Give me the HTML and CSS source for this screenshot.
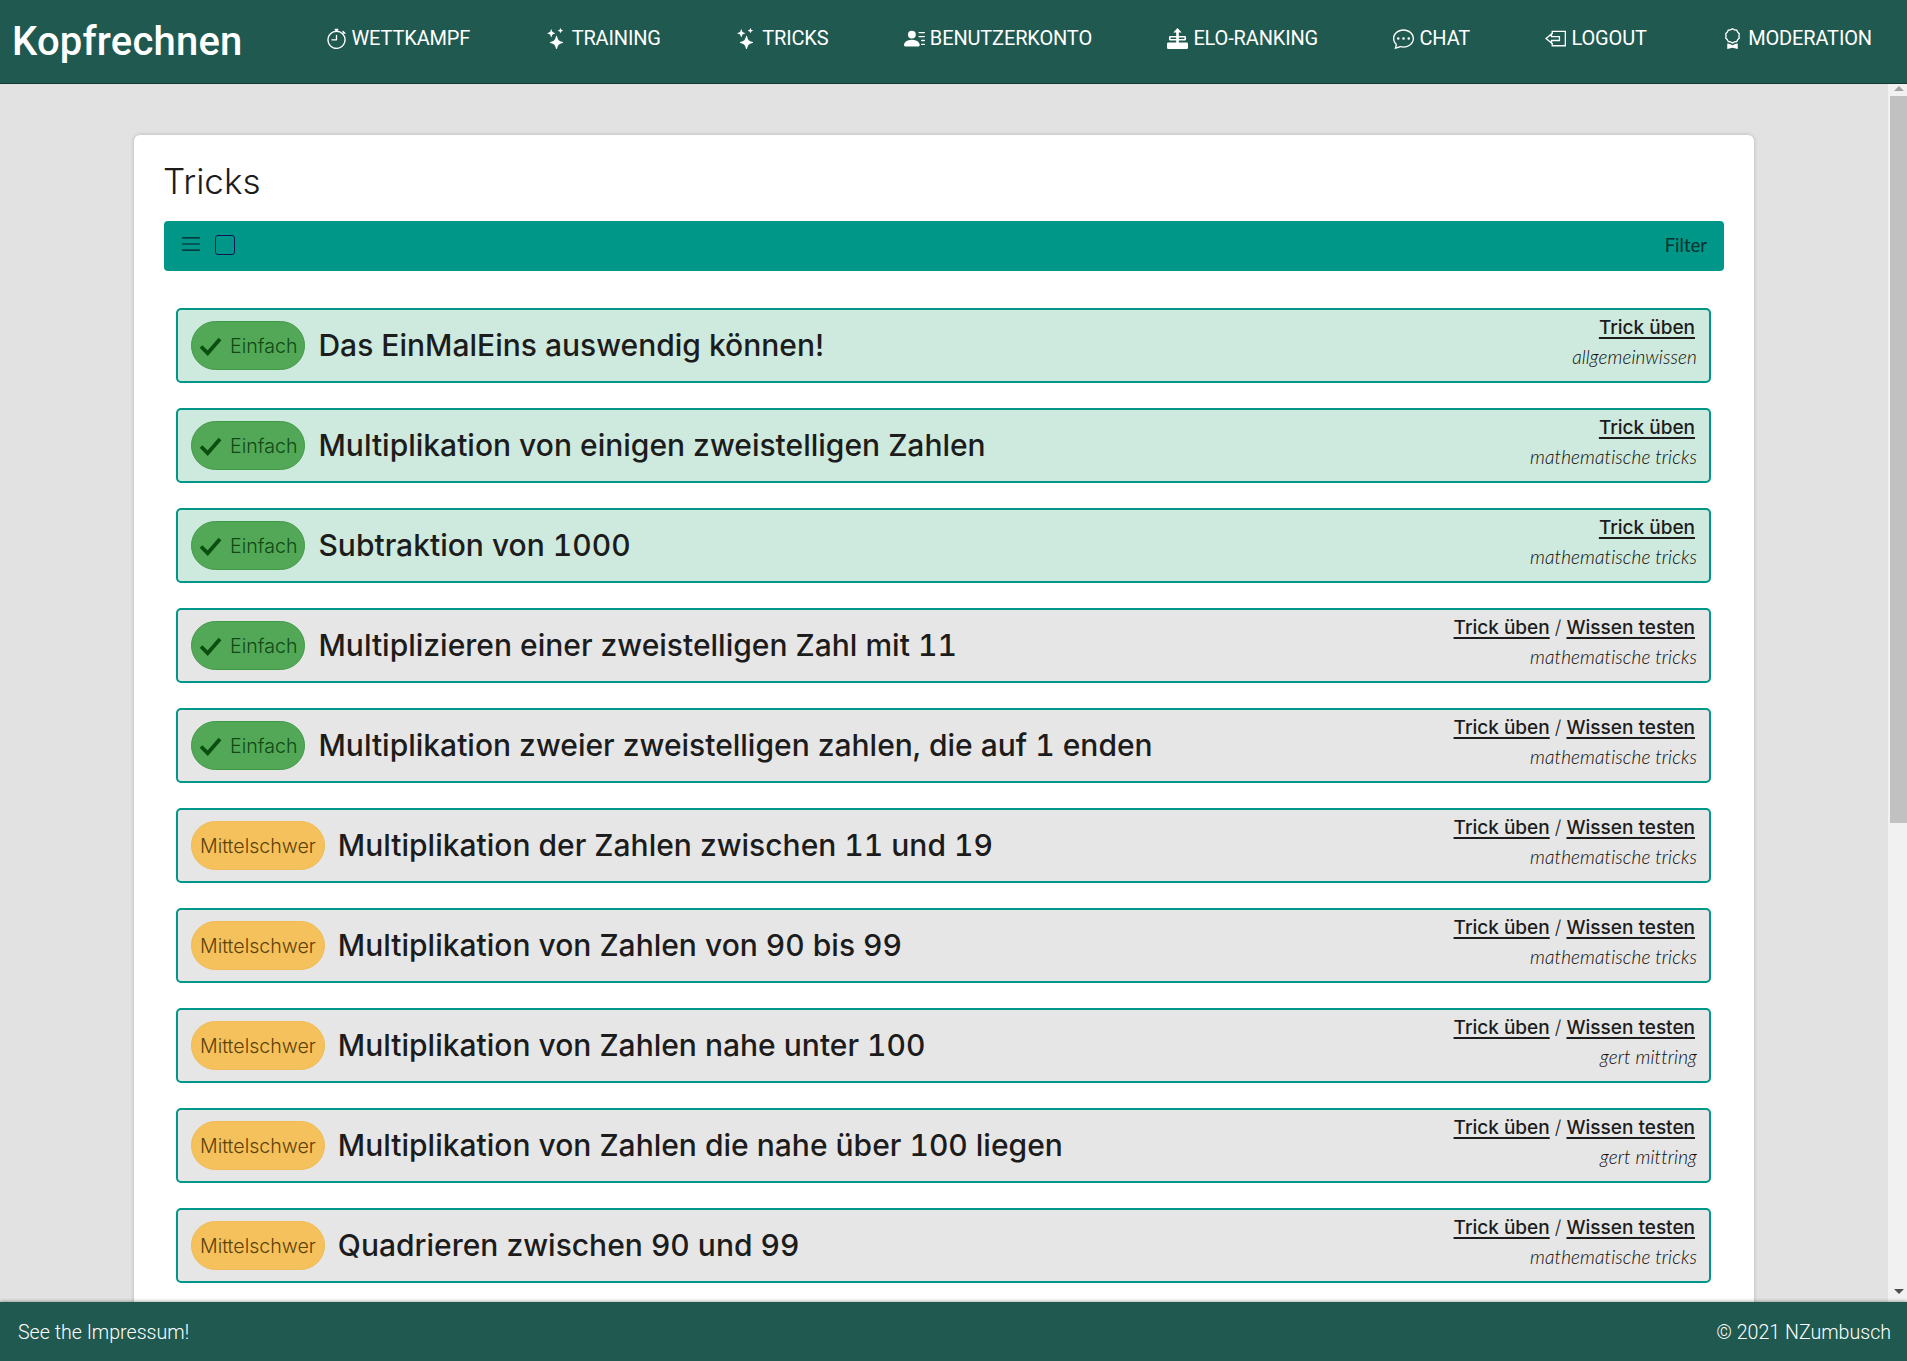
FILE: index.html
```html
<!DOCTYPE html>
<html lang="de">
<head>
    <meta charset="UTF-8">
    <meta name="viewport" content="width=device-width, initial-scale=1.0">
    <title>Kopfrechnen</title>
    <link rel="stylesheet" href="styles.css">
</head>
<body>
    <nav class="navbar">
        <a class="brand" href="#">Kopfrechnen</a>
        <ul class="nav-list">
            <li><a href="#"><svg class="nav-icon" viewBox="0 0 16 16"><path d="M8.5 5.6a.5.5 0 1 0-1 0v2.9h-3a.5.5 0 0 0 0 1H8a.5.5 0 0 0 .5-.5V5.6z"/><path d="M6.5 1A.5.5 0 0 1 7 .5h2a.5.5 0 0 1 0 1v.57c1.36.196 2.594.78 3.584 1.64a.715.715 0 0 1 .012-.013l.354-.354-.354-.353a.5.5 0 0 1 .707-.708l1.414 1.415a.5.5 0 1 1-.707.707l-.353-.354-.354.354a.512.512 0 0 1-.013.012A7 7 0 1 1 7 2.071V1.5a.5.5 0 0 1-.5-.5zM8 3a6 6 0 1 0 .001 12A6 6 0 0 0 8 3z"/></svg>WETTKAMPF</a></li>
            <li><a href="#"><svg class="nav-icon" viewBox="0 0 16 16"><path d="M7.657 6.247c.11-.33.576-.33.686 0l.645 1.937a2.89 2.89 0 0 0 1.829 1.828l1.936.645c.33.11.33.576 0 .686l-1.937.645a2.89 2.89 0 0 0-1.828 1.829l-.645 1.936a.361.361 0 0 1-.686 0l-.645-1.937a2.89 2.89 0 0 0-1.828-1.828l-1.937-.645a.361.361 0 0 1 0-.686l1.937-.645a2.89 2.89 0 0 0 1.828-1.828l.645-1.937zM3.794 1.148a.217.217 0 0 1 .412 0l.387 1.162c.173.518.579.924 1.097 1.097l1.162.387a.217.217 0 0 1 0 .412l-1.162.387A1.734 1.734 0 0 0 4.593 5.69l-.387 1.162a.217.217 0 0 1-.412 0L3.407 5.69A1.734 1.734 0 0 0 2.31 4.593l-1.162-.387a.217.217 0 0 1 0-.412l1.162-.387A1.734 1.734 0 0 0 3.407 2.31l.387-1.162zM10.863.099a.145.145 0 0 1 .274 0l.258.774c.115.346.386.617.732.732l.774.258a.145.145 0 0 1 0 .274l-.774.258a1.156 1.156 0 0 0-.732.732l-.258.774a.145.145 0 0 1-.274 0l-.258-.774a1.156 1.156 0 0 0-.732-.732L9.1 2.137a.145.145 0 0 1 0-.274l.774-.258c.346-.115.617-.386.732-.732L10.863.1z"/></svg>TRAINING</a></li>
            <li><a href="#"><svg class="nav-icon" viewBox="0 0 16 16"><path d="M7.657 6.247c.11-.33.576-.33.686 0l.645 1.937a2.89 2.89 0 0 0 1.829 1.828l1.936.645c.33.11.33.576 0 .686l-1.937.645a2.89 2.89 0 0 0-1.828 1.829l-.645 1.936a.361.361 0 0 1-.686 0l-.645-1.937a2.89 2.89 0 0 0-1.828-1.828l-1.937-.645a.361.361 0 0 1 0-.686l1.937-.645a2.89 2.89 0 0 0 1.828-1.828l.645-1.937zM3.794 1.148a.217.217 0 0 1 .412 0l.387 1.162c.173.518.579.924 1.097 1.097l1.162.387a.217.217 0 0 1 0 .412l-1.162.387A1.734 1.734 0 0 0 4.593 5.69l-.387 1.162a.217.217 0 0 1-.412 0L3.407 5.69A1.734 1.734 0 0 0 2.31 4.593l-1.162-.387a.217.217 0 0 1 0-.412l1.162-.387A1.734 1.734 0 0 0 3.407 2.31l.387-1.162zM10.863.099a.145.145 0 0 1 .274 0l.258.774c.115.346.386.617.732.732l.774.258a.145.145 0 0 1 0 .274l-.774.258a1.156 1.156 0 0 0-.732.732l-.258.774a.145.145 0 0 1-.274 0l-.258-.774a1.156 1.156 0 0 0-.732-.732L9.1 2.137a.145.145 0 0 1 0-.274l.774-.258c.346-.115.617-.386.732-.732L10.863.1z"/></svg>TRICKS</a></li>
            <li><a href="#"><svg class="nav-icon" viewBox="0 0 16 16"><path d="M6 8a3 3 0 1 0 0-6 3 3 0 0 0 0 6zm-5 6s-1 0-1-1 1-4 6-4 6 3 6 4-1 1-1 1H1zM11 3.5a.5.5 0 0 1 .5-.5h4a.5.5 0 0 1 0 1h-4a.5.5 0 0 1-.5-.5zm.5 2.5a.5.5 0 0 0 0 1h4a.5.5 0 0 0 0-1h-4zm2 3a.5.5 0 0 0 0 1h2a.5.5 0 0 0 0-1h-2zm0 3a.5.5 0 0 0 0 1h2a.5.5 0 0 0 0-1h-2z"/></svg>BENUTZERKONTO</a></li>
            <li><a href="#"><svg class="nav-icon" viewBox="0 0 16 16"><path fill-rule="evenodd" d="M8 0 4.800 3.500H7V6H2.500a1 1 0 0 0-1 1v1.500a1 1 0 0 0 1 1H7V11H1a1 1 0 0 0-1 1v3a1 1 0 0 0 1 1h14a1 1 0 0 0 1-1v-3a1 1 0 0 0-1-1H9V9.500h4.500a1 1 0 0 0 1-1V7a1 1 0 0 0-1-1H9V3.500h2.200L8 0zM2.700 7.200H7v1.100H2.700V7.200zm6.300 0h4.300v1.100H9V7.200z"/></svg>ELO-RANKING</a></li>
            <li><a href="#"><svg class="nav-icon" viewBox="0 0 16 16"><path d="M5 8a1 1 0 1 1-2 0 1 1 0 0 1 2 0zm4 0a1 1 0 1 1-2 0 1 1 0 0 1 2 0zm3 1a1 1 0 1 0 0-2 1 1 0 0 0 0 2z"/><path d="M2.165 15.803l.02-.004c1.83-.363 2.948-.842 3.468-1.105A9.06 9.06 0 0 0 8 15c4.418 0 8-3.134 8-7s-3.582-7-8-7-8 3.134-8 7c0 1.760.743 3.370 1.970 4.600a10.437 10.437 0 0 1-.524 2.318l-.003.011a10.722 10.722 0 0 1-.244.637c-.079.186.074.394.273.362a21.673 21.673 0 0 0 .693-.125zm.8-3.108a1 1 0 0 0-.287-.801C1.618 10.830 1 9.468 1 8c0-3.192 3.004-6 7-6s7 2.808 7 6c0 3.193-3.004 6-7 6a8.060 8.060 0 0 1-2.088-.272 1 1 0 0 0-.711.074c-.387.196-1.240.570-2.634.893a10.970 10.970 0 0 0 .398-2z"/></svg>CHAT</a></li>
            <li><a href="#"><svg class="nav-icon outline" viewBox="0 0 16 16"><path d="M5.500 4.500V2.500H15.500V13.500H5.500V11.500"/><path d="M.8 8 5 4.500V6.500H11V9.500H5V11.500z"/></svg>LOGOUT</a></li>
            <li><a href="#"><svg class="nav-icon" viewBox="0 0 16 16"><path d="M9.669.864 8 0 6.331.864l-1.858.282-.842 1.680-1.337 1.320L2.600 6l-.306 1.854 1.337 1.320.842 1.680 1.858.282L8 12l1.669-.864 1.858-.282.842-1.680 1.337-1.320L13.400 6l.306-1.854-1.337-1.320-.842-1.680L9.669.864zm1.196 1.193.684 1.365 1.086 1.072L12.387 6l.248 1.506-1.086 1.072-.684 1.365-1.510.229L8 10.874l-1.355-.702-1.510-.229-.684-1.365-1.086-1.072L3.614 6l-.250-1.506 1.087-1.072.684-1.365 1.510-.229L8 1.126l1.356.702 1.509.229z"/><path d="M4 11.794V16l4-1 4 1v-4.206l-2.018.306L8 13.126 6.018 12.100 4 11.794z"/></svg>MODERATION</a></li>
        </ul>
    </nav>

    <div class="viewport">
        <main class="content">
            <section class="card">
                <h1 class="card-title">Tricks</h1>
                <div class="toolbar">
                    <svg class="burger" viewBox="0 0 18 14"><path d="M0 .8h18M0 7h18M0 13.200h18"/></svg>
                    <span class="checkbox"></span>
                    <span class="filter">Filter</span>
                </div>

                <div class="trick done">
                    <span class="badge easy"><svg class="check" viewBox="0 0 24 20"><path d="M2 10l7 7L22 2"/></svg>Einfach</span>
                    <span class="trick-name">Das EinMalEins auswendig können!</span>
                    <div class="trick-side">
                        <div class="trick-links"><a href="#">Trick üben</a></div>
                        <div class="trick-tag">allgemeinwissen</div>
                    </div>
                </div>
                <div class="trick done">
                    <span class="badge easy"><svg class="check" viewBox="0 0 24 20"><path d="M2 10l7 7L22 2"/></svg>Einfach</span>
                    <span class="trick-name">Multiplikation von einigen zweistelligen Zahlen</span>
                    <div class="trick-side">
                        <div class="trick-links"><a href="#">Trick üben</a></div>
                        <div class="trick-tag">mathematische tricks</div>
                    </div>
                </div>
                <div class="trick done">
                    <span class="badge easy"><svg class="check" viewBox="0 0 24 20"><path d="M2 10l7 7L22 2"/></svg>Einfach</span>
                    <span class="trick-name">Subtraktion von 1000</span>
                    <div class="trick-side">
                        <div class="trick-links"><a href="#">Trick üben</a></div>
                        <div class="trick-tag">mathematische tricks</div>
                    </div>
                </div>
                <div class="trick">
                    <span class="badge easy"><svg class="check" viewBox="0 0 24 20"><path d="M2 10l7 7L22 2"/></svg>Einfach</span>
                    <span class="trick-name">Multiplizieren einer zweistelligen Zahl mit 11</span>
                    <div class="trick-side">
                        <div class="trick-links"><a href="#">Trick üben</a> <span class="sep">/</span> <a href="#">Wissen testen</a></div>
                        <div class="trick-tag">mathematische tricks</div>
                    </div>
                </div>
                <div class="trick">
                    <span class="badge easy"><svg class="check" viewBox="0 0 24 20"><path d="M2 10l7 7L22 2"/></svg>Einfach</span>
                    <span class="trick-name">Multiplikation zweier zweistelligen zahlen, die auf 1 enden</span>
                    <div class="trick-side">
                        <div class="trick-links"><a href="#">Trick üben</a> <span class="sep">/</span> <a href="#">Wissen testen</a></div>
                        <div class="trick-tag">mathematische tricks</div>
                    </div>
                </div>
                <div class="trick">
                    <span class="badge medium">Mittelschwer</span>
                    <span class="trick-name">Multiplikation der Zahlen zwischen 11 und 19</span>
                    <div class="trick-side">
                        <div class="trick-links"><a href="#">Trick üben</a> <span class="sep">/</span> <a href="#">Wissen testen</a></div>
                        <div class="trick-tag">mathematische tricks</div>
                    </div>
                </div>
                <div class="trick">
                    <span class="badge medium">Mittelschwer</span>
                    <span class="trick-name">Multiplikation von Zahlen von 90 bis 99</span>
                    <div class="trick-side">
                        <div class="trick-links"><a href="#">Trick üben</a> <span class="sep">/</span> <a href="#">Wissen testen</a></div>
                        <div class="trick-tag">mathematische tricks</div>
                    </div>
                </div>
                <div class="trick">
                    <span class="badge medium">Mittelschwer</span>
                    <span class="trick-name">Multiplikation von Zahlen nahe unter 100</span>
                    <div class="trick-side">
                        <div class="trick-links"><a href="#">Trick üben</a> <span class="sep">/</span> <a href="#">Wissen testen</a></div>
                        <div class="trick-tag">gert mittring</div>
                    </div>
                </div>
                <div class="trick">
                    <span class="badge medium">Mittelschwer</span>
                    <span class="trick-name">Multiplikation von Zahlen die nahe über 100 liegen</span>
                    <div class="trick-side">
                        <div class="trick-links"><a href="#">Trick üben</a> <span class="sep">/</span> <a href="#">Wissen testen</a></div>
                        <div class="trick-tag">gert mittring</div>
                    </div>
                </div>
                <div class="trick">
                    <span class="badge medium">Mittelschwer</span>
                    <span class="trick-name">Quadrieren zwischen 90 und 99</span>
                    <div class="trick-side">
                        <div class="trick-links"><a href="#">Trick üben</a> <span class="sep">/</span> <a href="#">Wissen testen</a></div>
                        <div class="trick-tag">mathematische tricks</div>
                    </div>
                </div>
            </section>
        </main>
        <div class="scrollbar">
            <span class="arrow-up"></span>
            <span class="thumb"></span>
            <span class="arrow-down"></span>
        </div>
    </div>

    <footer class="footer">
        <span>See the Impressum!</span>
        <span>© 2021 NZumbusch</span>
    </footer>
</body>
</html>
```

FILE: styles.css
```css
html, body {
    height: 100%;
    margin: 0;
}
body {
    display: flex;
    flex-direction: column;
    overflow: hidden;
    font-family: Inter, "Noto Sans", sans-serif;
    background-color: #e2e2e2;
    color: #1c1c1c;
}
a {
    color: inherit;
}

/* top bar */
.navbar {
    display: flex;
    align-items: center;
    height: 83px;
    padding: 0 35px 0 12px;
    flex: none;
    background-color: #205950;
    border-bottom: 1px solid #0f3d36;
}
.brand {
    font-family: Roboto, sans-serif;
    font-size: 40px;
    font-weight: 500;
    letter-spacing: 0.2px;
    color: #fff;
    text-decoration: none;
    margin-right: 83px;
}
.nav-list {
    display: flex;
    flex: 1;
    justify-content: space-between;
    list-style: none;
    margin: -7px 0 0;
    padding: 0;
}
.nav-list a {
    display: flex;
    align-items: center;
    gap: 5px;
    font-family: Roboto, sans-serif;
    font-size: 20px;
    letter-spacing: -0.15px;
    color: #fff;
    text-decoration: none;
}
.nav-icon {
    width: 21px;
    height: 21px;
    fill: #fff;
}
.nav-icon.outline {
    fill: none;
    stroke: #fff;
    stroke-width: 1;
}

/* scrolling area */
.viewport {
    display: flex;
    flex: 1;
    min-height: 0;
}
.content {
    flex: 1;
    overflow: hidden;
    padding: 51px 134px 0;
}
.card {
    width: 1620px;
    padding: 25px 30px 30px;
    box-sizing: border-box;
    background-color: #fff;
    border-radius: 6px;
    box-shadow: 0 0 4px rgba(0, 0, 0, 0.2);
}
.card-title {
    font-size: 35px;
    font-weight: 300;
    line-height: 42px;
    margin: 0 0 19px -1px;
}
.toolbar {
    display: flex;
    align-items: center;
    height: 50px;
    padding: 0 17px 0 18px;
    margin-bottom: 37px;
    background-color: #009688;
    border-radius: 4px;
}
.burger {
    width: 18px;
    height: 14px;
    margin-top: -5px;
    fill: none;
    stroke: #04202a;
    stroke-width: 1.2;
}
.checkbox {
    width: 18px;
    height: 18px;
    margin: -2px 0 0 15px;
    border: 1px solid #0a1a50;
    border-radius: 3px;
}
.filter {
    margin: -3px 0 0 auto;
    font-family: Lato, sans-serif;
    font-size: 18.5px;
    color: #06332d;
}

/* trick rows */
.trick {
    display: flex;
    align-items: center;
    height: 75px;
    box-sizing: border-box;
    margin: 0 13px 25px 12px;
    padding: 0 12px 0 13px;
    background-color: #e6e6e6;
    border: 2px solid #009688;
    border-radius: 5px;
}
.trick.done {
    background-color: #cee9dd;
}
.badge {
    display: flex;
    align-items: center;
    height: 49px;
    box-sizing: border-box;
    padding: 1px 8px 0;
    margin-right: 13px;
    font-size: 19.6px;
    font-weight: 300;
    border-radius: 25px;
    border: 1px solid transparent;
}
.badge.easy {
    padding: 1px 7px 0;
    background-color: #52a857;
    border-color: #3f9a45;
    color: #0f4a14;
}
.badge.medium {
    background-color: #f5c15c;
    border-color: #f0bb55;
    color: #5c4208;
}
.check {
    width: 23px;
    height: 19px;
    margin-right: 8px;
    fill: none;
    stroke: #0b4f10;
    stroke-width: 4;
}
.trick-name {
    margin-top: -1px;
    font-size: 30px;
    font-weight: 500;
    font-variant-numeric: tabular-nums;
}
.trick-side {
    margin: -7px 0 0 auto;
    text-align: right;
}
.trick-links {
    font-size: 19px;
    font-weight: 500;
    line-height: 24px;
    padding-right: 2px;
}
.trick-links a {
    text-decoration-thickness: 2px;
    text-underline-offset: 3px;
}
.sep {
    font-weight: 300;
}
.trick-tag {
    font-family: Lato, sans-serif;
    font-size: 19px;
    font-weight: 300;
    font-style: italic;
    letter-spacing: 0.1px;
    line-height: 22px;
    margin-top: 6px;
    color: #0a0a0a;
}

/* fake scrollbar */
.scrollbar {
    display: flex;
    flex-direction: column;
    align-items: center;
    width: 19px;
    flex: none;
    box-sizing: border-box;
    padding-left: 2px;
    background-color: #f1f1f1;
}
.thumb {
    width: 17px;
    height: 727px;
    margin-top: 5px;
    background-color: #c1c1c1;
}
.arrow-up {
    margin-top: 2px;
    border: 5px solid transparent;
    border-top: 0;
    border-bottom-color: #a3a3a3;
}
.arrow-down {
    margin-top: auto;
    margin-bottom: 8px;
    border: 5px solid transparent;
    border-bottom: 0;
    border-top-color: #505050;
}

.footer {
    display: flex;
    justify-content: space-between;
    align-items: center;
    height: 59px;
    flex: none;
    padding: 1px 16px 0 18px;
    box-sizing: border-box;
    font-family: Roboto, sans-serif;
    font-size: 19.6px;
    font-weight: 300;
    color: #fff;
    background-color: #205950;
    box-shadow: 0 -1px 3px rgba(0, 0, 0, 0.3);
}
```
